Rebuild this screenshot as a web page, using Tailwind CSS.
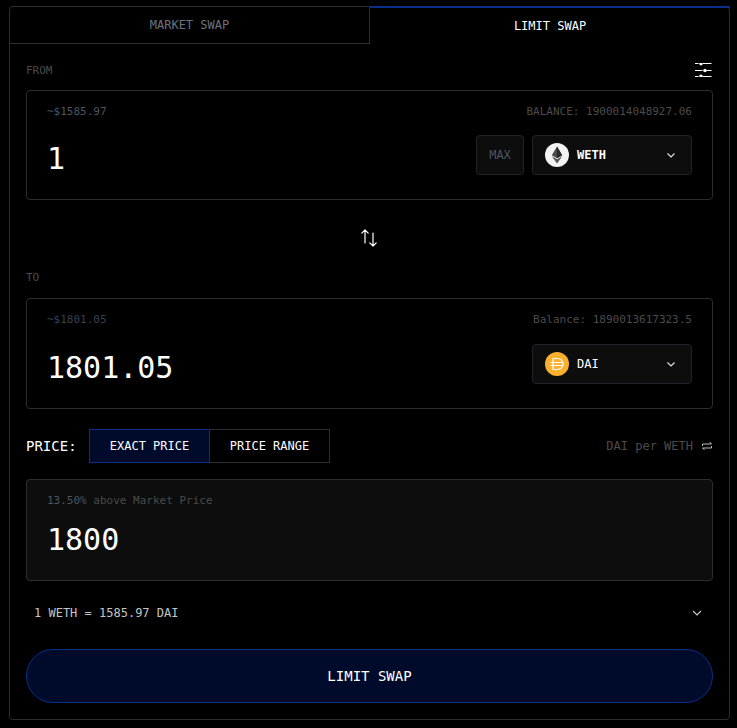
<!DOCTYPE html>
<html>
<head>
<meta charset="utf-8">
<script src="https://cdn.jsdelivr.net/npm/@tailwindcss/browser@4"></script>
</head>
<body class="bg-black font-['DejaVu_Sans_Mono','Liberation_Mono',monospace]">
<div class="w-[737px] h-[728px] pt-[6px] pl-[9px] overflow-hidden">
  <div class="w-[721px] h-[714px] border border-[#2c2d30] rounded-[4px] flex flex-col">
    <div class="grid grid-cols-[360px_1fr] h-[37px] text-[12px] leading-none">
      <div class="flex items-center justify-center border-b border-r border-[#2c2d30] text-[#6b7280]">MARKET SWAP</div>
      <div class="flex items-center justify-center border-t-2 border-[#0a2f8a] -mt-px -mr-px -ml-px pl-px text-white font-medium">LIMIT SWAP</div>
    </div>
    <div class="flex-1 px-4 flex flex-col">
      <div class="h-[46px] pt-[6px] flex items-center justify-between text-[11px] text-[#4b4b4b]">
        <span class="pt-[2px]">FROM</span>
        <svg class="w-[17px] h-[14px] mr-[1px]" viewBox="0 0 17 14" fill="none" stroke="white" stroke-width="1">
          <path d="M0 .5h3.5M8 .5h8.5M0 7.5h7.5M12 7.5h4.5M0 13.5h3.5M8 13.5h8.5"/>
          <circle cx="6" cy=".7" r="1.8" fill="white" stroke="none"/><circle cx="10" cy="7.5" r="1.8" fill="white" stroke="none"/><circle cx="6" cy="13.3" r="1.8" fill="white" stroke="none"/>
        </svg>
      </div>
      <div class="h-[110px] border border-[#2c2d30] rounded-[4px] px-5 pt-[14px] flex flex-col">
        <div class="flex justify-between text-[11px] leading-[14px] text-[#4b4b4b]"><span class="text-[#4b5563]">~$1585.97</span><span>BALANCE: 1900014048927.06</span></div>
        <div class="flex items-center justify-between mt-[16px] h-[40px]">
          <span class="text-[30px] text-white leading-none pt-[8px]">1</span>
          <div class="flex gap-2">
            <div class="w-[48px] h-[40px] flex items-center justify-center bg-[#0d0d0d] border border-[#222326] rounded-[4px] text-[12px] text-[#4b5563]">MAX</div>
            <div class="w-[160px] h-[40px] flex items-center bg-[#0d0d0d] border border-[#222326] rounded-[4px] pl-3 pr-[15px]">
              <svg class="w-6 h-6" viewBox="0 0 24 24"><circle cx="12" cy="12" r="12" fill="#f3f3f3"/><path d="M12 3.5L6.8 12.2 12 15.2l5.2-3z" fill="#4a4a4a"/><path d="M12 3.5v11.7l5.2-3z" fill="#2a2a2a"/><path d="M6.8 13.3L12 20.5l5.2-7.2-5.2 3z" fill="#555"/></svg>
              <span class="ml-2 text-[12px] font-bold text-white">WETH</span>
              <svg class="ml-auto w-[10px] h-[10px]" viewBox="0 0 10 10" fill="none" stroke="#e5e5e5" stroke-width="1.1"><path d="M1.5 3.5L5 7l3.5-3.5"/></svg>
            </div>
          </div>
        </div>
      </div>
      <div class="h-[71px] pt-[5px] flex items-center justify-center">
        <svg class="w-5 h-5 mr-[1px]" viewBox="0 0 20 20" fill="none" stroke="white" stroke-width="1.2" stroke-linecap="round" stroke-linejoin="round"><path d="M6 15V2M2.8 5.2L6 2l3.2 3.2M14 5v13M10.8 14.8L14 18l3.2-3.2"/></svg>
      </div>
      <div class="h-[27px] text-[11px] leading-[14px] text-[#4b4b4b]">TO</div>
      <div class="h-[111px] border border-[#2c2d30] rounded-[4px] px-5 pt-[14px] flex flex-col">
        <div class="flex justify-between text-[11px] leading-[14px] text-[#4b4b4b]"><span class="text-[#374151]">~$1801.05</span><span>Balance: 1890013617323.5</span></div>
        <div class="flex items-center justify-between mt-[17px] h-[40px]">
          <span class="text-[30px] text-white leading-none pt-[8px]">1801.05</span>
          <div class="w-[160px] h-[40px] flex items-center bg-[#0d0d0d] border border-[#222326] rounded-[4px] pl-3 pr-[15px]">
            <svg class="w-6 h-6" viewBox="0 0 24 24"><circle cx="12" cy="12" r="12" fill="#f9b02d"/><path d="M8 6.5h4.5a5.5 5.5 0 0 1 0 11H8zM5.5 10.5h13M5.5 13.5h13" fill="none" stroke="#fff" stroke-width="1.2"/></svg>
            <span class="ml-2 text-[12px] font-medium text-white">DAI</span>
            <svg class="ml-auto w-[10px] h-[10px]" viewBox="0 0 10 10" fill="none" stroke="#e5e5e5" stroke-width="1.1"><path d="M1.5 3.5L5 7l3.5-3.5"/></svg>
          </div>
        </div>
      </div>
      <div class="mt-[20px] h-[34px] flex items-center">
        <span class="text-[14px] text-white font-medium w-[63px]">PRICE:</span>
        <div class="flex h-[34px] text-[12px] text-white font-medium">
          <div class="w-[121px] flex items-center justify-center bg-[#000b2b] border border-[#0a2f8a]">EXACT PRICE</div>
          <div class="w-[120px] flex items-center justify-center border border-l-0 border-[#2c2d30]">PRICE RANGE</div>
        </div>
        <div class="ml-auto flex items-center gap-[8px] text-[12px] text-[#4b4b4b]">
          <span>DAI per WETH</span>
          <svg class="w-[12px] h-[12px]" viewBox="0 0 12 12" fill="none" stroke="#bbb" stroke-width="1"><path d="M1.5 6V4H10.5L8.5 2M10.5 6V8H1.5L3.5 10"/></svg>
        </div>
      </div>
      <div class="mt-4 h-[102px] bg-[#0d0d0d] border border-[#2c2d30] rounded-[4px] px-5 pt-[14px]">
        <div class="text-[11px] leading-[14px] text-[#4b4b4b]"><span class="text-[#4b5563]">13.50%</span> above Market Price</div>
        <div class="mt-[14px] text-[30px] text-white leading-[36px]">1800</div>
      </div>
      <div class="h-[68px] flex items-center justify-between pl-2 pr-[11px] text-[12px] text-[#c4c4c4]">
        <span class="-mt-[4px]">1 WETH = 1585.97 DAI</span>
        <svg class="w-[10px] h-[10px] -mt-[4px]" viewBox="0 0 10 10" fill="none" stroke="#ccc" stroke-width="1.1"><path d="M1 3l4 4 4-4"/></svg>
      </div>
      <div class="h-[54px] rounded-full bg-[#000b2b] border border-[#0a2f8a] flex items-center justify-center text-[14px] text-white font-medium">LIMIT SWAP</div>
    </div>
  </div>
</div>
</body>
</html>
